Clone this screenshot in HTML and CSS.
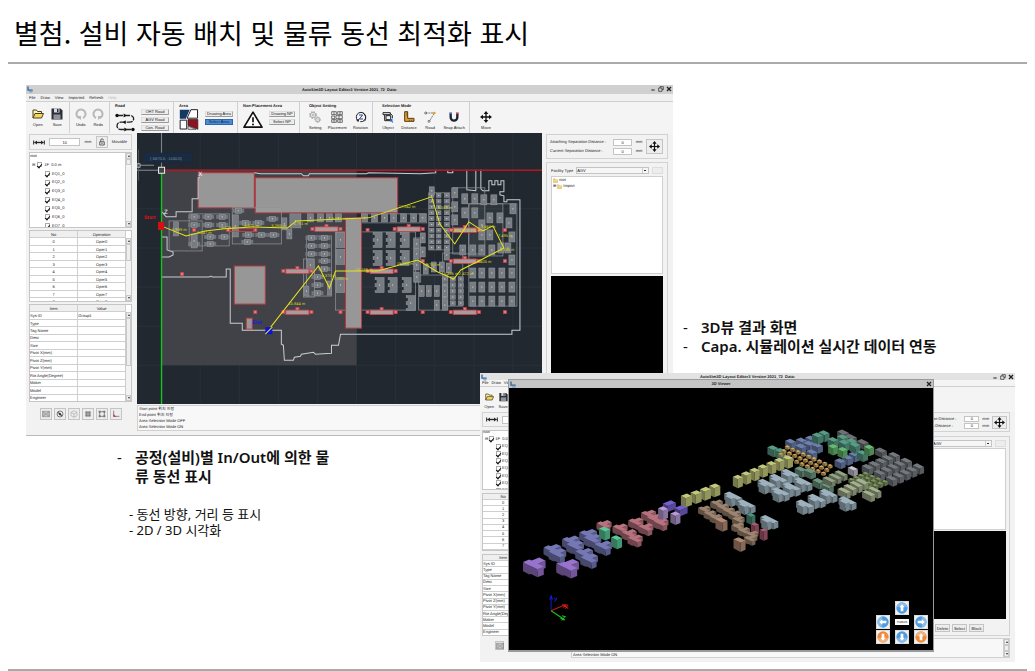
FILE: index.html
```html
<!DOCTYPE html>
<html lang="ko">
<head>
<meta charset="utf-8">
<meta name="viewport" content="width=device-width, initial-scale=1">
<title>별첨. 설비 자동 배치 및 물류 동선 최적화 표시</title>
<link rel="stylesheet" href="styles.css">
</head>
<body>
<svg class="defs" aria-hidden="true">
  <symbol id="i-open" viewBox="0 0 24 24"><path d="M2 20V4h7l2 3h8v4" fill="#fff3b0" stroke="#4a4020" stroke-width="2"/><path d="M2 20l4-9h17l-4 9z" fill="#f5d860" stroke="#4a4020" stroke-width="2"/></symbol>
  <symbol id="i-save" viewBox="0 0 24 24"><path d="M1 1h18l4 4v18H1z" fill="#2c2f36"/><path d="M6 1h11v8H6z" fill="#d8dade"/><path d="M12 2h3v6h-3z" fill="#2c2f36"/><path d="M5 13h14v10H5z" fill="#8f949c"/></symbol>
  <symbol id="i-undo" viewBox="0 0 24 24"><path d="M8 20a9 9 0 1 1 8 0" fill="none" stroke="#b9b9b9" stroke-width="4"/><path d="M2 16h10v8z" fill="#b9b9b9"/></symbol>
  <symbol id="i-redo" viewBox="0 0 24 24"><path d="M8 20a9 9 0 1 1 8 0" fill="none" stroke="#b9b9b9" stroke-width="4"/><path d="M22 16H12v8z" fill="#b9b9b9"/></symbol>
  <symbol id="i-road" viewBox="0 0 60 60"><path d="M6 9h38c16 0 16 20 0 20H18C2 29 2 51 18 51h34" fill="none" stroke="#222" stroke-width="4" stroke-dasharray="18 3"/><circle cx="6" cy="9" r="5" fill="#111"/><circle cx="54" cy="51" r="5" fill="#111"/><path d="M26 3l9 6-9 6zM32 23l-9 6 9 6zM28 45l9 6-9 6z" fill="#111"/></symbol>
  <symbol id="i-area" viewBox="0 0 60 64"><path d="M2 2h30L20 30H2z" fill="#123a63"/><path d="M36 2h20v26H24z" fill="#fff" stroke="#222" stroke-width="3"/><path d="M3 34h20v27H3z" fill="#fff" stroke="#222" stroke-width="3"/><path d="M27 32h30v30L27 50z" fill="#8e1220" stroke="#222" stroke-width="2"/><path d="M27 52l24 10H27z" fill="#ddd" stroke="#333" stroke-width="2"/></symbol>
  <symbol id="i-warn" viewBox="0 0 60 52"><path d="M30 4L57 49H3z" fill="#fff" stroke="#111" stroke-width="5" stroke-linejoin="round"/><path d="M30 19v15" stroke="#111" stroke-width="5"/><circle cx="30" cy="41" r="3" fill="#111"/></symbol>
  <symbol id="i-gear" viewBox="0 0 36 36"><g fill="none" stroke="#909090"><circle cx="12" cy="12" r="8" stroke-width="2"/><circle cx="12" cy="12" r="10" stroke-width="3" stroke-dasharray="4 4"/><circle cx="12" cy="12" r="3" stroke-width="2"/><circle cx="26" cy="26" r="6" stroke-width="2"/><circle cx="26" cy="26" r="8" stroke-width="3" stroke-dasharray="3 3"/><circle cx="26" cy="26" r="2"/></g></symbol>
  <symbol id="i-place" viewBox="0 0 36 36"><g fill="none" stroke="#333" stroke-width="2"><path d="M2 2h14v9H2zM20 2h14v9H20zM2 15h9v8H2zM15 14h19v9H15zM2 26h14v8H2zM20 26h14v8H20zM9 2v9M27 2v9M24 14v9M9 26v8M27 26v8"/></g></symbol>
  <symbol id="i-rot" viewBox="0 0 36 36"><path d="M8 28A14 14 0 1 1 16 32M28 31c6-6 6-18-4-25" fill="none" stroke="#222" stroke-width="3"/><path d="M3 26l10-2-3 10z" fill="#222"/><path d="M12 12h11L13 24h11" fill="none" stroke="#2b4b9a" stroke-width="3"/></symbol>
  <symbol id="i-object" viewBox="0 0 36 36"><path d="M3 5h22v6H3zM8 11v18h16M25 8l6 5v9M12 14h14v12H12z" fill="none" stroke="#222" stroke-width="3"/><path d="M24 22l10 5-4 2 4 5-3 1-3-4-3 3z" fill="#1f5fd0"/></symbol>
  <symbol id="i-dist" viewBox="0 0 36 36"><path d="M5 2h9v20h19v9H5z" fill="#e0a030" stroke="#5a3c10" stroke-width="3"/><path d="M9 6h5M9 12h5M19 26v5M26 26v5" stroke="#5a3c10" stroke-width="2"/></symbol>
  <symbol id="i-node" viewBox="0 0 36 36"><path d="M5 6h24M30 8L16 31" fill="none" stroke="#444" stroke-width="2" stroke-dasharray="6 2"/><circle cx="5" cy="6" r="3" fill="#fff" stroke="#333" stroke-width="2"/><circle cx="31" cy="6" r="4" fill="#e8a020"/><circle cx="15" cy="31" r="3" fill="#fff" stroke="#333" stroke-width="2"/></symbol>
  <symbol id="i-snap" viewBox="0 0 36 36"><path d="M8 7v12a10 10 0 0 0 20 0V7" fill="none" stroke="#1c2230" stroke-width="7"/><path d="M4 4h8v5H4z" fill="#4b78c8"/><path d="M24 4h8v5h-8z" fill="#d05050"/></symbol>
  <symbol id="i-move" viewBox="0 0 36 36"><path d="M18 4v28M4 18h28" stroke="#111" stroke-width="4"/><path d="M18 0l7 9H11zM18 36l7-9H11zM0 18l9-7v14zM36 18l-9-7v14z" fill="#111"/></symbol>
  <symbol id="i-span" viewBox="0 0 36 14"><path d="M2 1v12M34 1v12M5 7h26" stroke="#222" stroke-width="3"/><path d="M4 7l8-5v10zM32 7l-8-5v10zM18 2v10" fill="#222" stroke="#222"/></symbol>
  <symbol id="i-lock" viewBox="0 0 24 30"><path d="M3 14h18v13H3zM7 14V6c0-5 10-5 10 0v3M9 20h6" fill="none" stroke="#333" stroke-width="3"/></symbol>
  <symbol id="i-folder" viewBox="0 0 18 16"><path d="M1 2h6l2 3h8v10H1z" fill="#f0cb72" stroke="#b98a2a" stroke-width="1"/><path d="M1 9h16" stroke="#fff0b8" stroke-width="2"/></symbol>
  <symbol id="i-logo" viewBox="0 0 18 18"><path d="M3 0v11h14" fill="none" stroke="#2b66a8" stroke-width="4"/><path d="M6 14h11M7 17h9" stroke="#6c8cae" stroke-width="2"/></symbol>
  <symbol id="i-restore" viewBox="0 0 18 18"><path d="M6 6V2h10v9h-4M2 6h10v10H2z" fill="none" stroke="#222" stroke-width="2"/></symbol>
  <symbol id="i-close" viewBox="0 0 18 18"><path d="M3 3l12 12M15 3L3 15" stroke="#222" stroke-width="4"/></symbol>
  <symbol id="i-min" viewBox="0 0 18 18"><path d="M4 12h10" stroke="#222" stroke-width="3"/></symbol>
  <symbol id="i-fit" viewBox="0 0 24 24"><path d="M2 4h20v16H2zM2 9h20M2 15h20M8 12h8M2 4l6 5M22 4l-6 5M2 20l6-5M22 20l-6-5" fill="none" stroke="#777" stroke-width="2"/></symbol>
  <symbol id="i-compass" viewBox="0 0 24 24"><circle cx="12" cy="12" r="9" fill="none" stroke="#444" stroke-width="2"/><path d="M5 6l9 4 5 9-9-4z" fill="#333"/></symbol>
  <symbol id="i-cube" viewBox="0 0 24 24"><path d="M12 2l9 5v10l-9 5-9-5V7zM3 7l9 5 9-5M12 12v10" fill="none" stroke="#aaa" stroke-width="2"/></symbol>
  <symbol id="i-grid" viewBox="0 0 24 24"><path d="M3 7h18M3 12h18M3 17h18M7 3v18M12 3v18M17 3v18" stroke="#666" stroke-width="2"/></symbol>
  <symbol id="i-frame" viewBox="0 0 24 24"><path d="M5 5h14v14H5z" fill="none" stroke="#555" stroke-width="2"/><path d="M2 2h6v6H2zM16 2h6v6h-6zM2 16h6v6H2zM16 16h6v6h-6z" fill="#777"/></symbol>
  <symbol id="i-axis" viewBox="0 0 24 24"><path d="M5 2v17h17" fill="none" stroke="#555" stroke-width="2"/><path d="M4 12l9 8H4z" fill="#c33"/></symbol>
  <symbol id="i-arrow" viewBox="0 0 36 36"><circle cx="18" cy="18" r="17" fill="currentColor"/><path d="M3 16a15 14 0 0 1 30 0c-9-4-21-4-30 0z" fill="#fff" opacity=".35"/><path d="M18 7l8 9h-4v12h-8V16h-4z" fill="#fff"/></symbol>
</svg>

<div class="slide">
  <header class="head"><h1>별첨. 설비 자동 배치 및 물류 동선 최적화 표시</h1></header>

  <main class="board">
    <section class="app app-main" aria-label="Layout editor">
      <div class="titlebar"><svg class="logo"><use href="#i-logo"/></svg><b>AutoSim3D Layout Editor3 Version 2021_72&nbsp; Data:</b>
        <span class="winctl"><svg><use href="#i-min"/></svg><svg><use href="#i-restore"/></svg><svg><use href="#i-close"/></svg></span></div>
      <nav class="menu"><span>File</span><span>Draw</span><span>View</span><span>Imported</span><span>Refresh</span><span class="off">Help</span></nav>
      <div class="toolbar">
        <div class="grp g-file plain"><button class="tool"><svg><use href="#i-open"/></svg>Open</button><button class="tool"><svg><use href="#i-save"/></svg>Save</button></div>
        <div class="grp g-undo plain"><button class="tool"><svg><use href="#i-undo"/></svg>Undo</button><button class="tool"><svg><use href="#i-redo"/></svg>Redo</button></div>
        <div class="grp g-road"><b>Road</b><div class="pair"><svg class="big"><use href="#i-road"/></svg><div class="stack three"><button>OHT Road</button><button>AGV Road</button><button>Con. Road</button></div></div></div>
        <div class="grp g-area"><b>Area</b><div class="pair"><svg class="big"><use href="#i-area"/></svg><div class="stack"><button>Drawing Area</button><button class="on">Select Area</button></div></div></div>
        <div class="grp g-np"><b>Non-Placement Area</b><div class="pair"><svg class="big"><use href="#i-warn"/></svg><div class="stack"><button>Drawing NP</button><button>Select NP</button></div></div></div>
        <div class="grp g-obj"><b>Object Setting</b><div class="pair even"><button class="tool"><svg><use href="#i-gear"/></svg>Setting</button><button class="tool"><svg><use href="#i-place"/></svg>Placement</button><button class="tool"><svg><use href="#i-rot"/></svg>Rotation</button></div></div>
        <div class="grp g-sel"><b>Selection Mode</b><div class="pair even"><button class="tool"><svg><use href="#i-object"/></svg>Object</button><button class="tool"><svg><use href="#i-dist"/></svg>Distance</button><button class="tool"><svg><use href="#i-node"/></svg>Road</button><button class="tool"><svg><use href="#i-snap"/></svg>Snap Attach</button></div></div>
        <div class="grp g-move"><b>&nbsp;</b><div class="pair"><button class="tool"><svg><use href="#i-move"/></svg>Move</button></div></div>
      </div>
      <div class="work">
        <aside class="left">
          <div class="panel unit"><svg class="span"><use href="#i-span"/></svg><input type="text" value="10" aria-label="Grid size"><span>mm</span><button class="lock" aria-label="Lock"><svg><use href="#i-lock"/></svg></button><span>Movable</span></div>
          <div class="scroller tree-box"><div class="tree" data-tree></div><div class="sbar"><i></i><u></u><i class="dn"></i></div></div>
          <div class="scroller oper-box"><table class="oper" data-oper></table><div class="sbar below"><i></i><u></u><i class="dn"></i></div></div>
          <div class="scroller item-box"><table class="item" data-item></table><div class="sbar below long"><i></i><u></u><i class="dn"></i></div></div>
          <div class="iconrow"><button aria-label="Fit"><svg><use href="#i-fit"/></svg></button><button aria-label="Orbit"><svg><use href="#i-compass"/></svg></button><button aria-label="Cube"><svg><use href="#i-cube"/></svg></button><button aria-label="Grid"><svg><use href="#i-grid"/></svg></button><button aria-label="Frame"><svg><use href="#i-frame"/></svg></button><button aria-label="Axis"><svg><use href="#i-axis"/></svg></button></div>
        </aside>
        <svg class="plan" id="plan" viewBox="137 133 404 271" preserveAspectRatio="xMidYMid slice" role="img" aria-label="2D layout"></svg>
        <aside class="right">
          <div class="panel dist"><div class="rows"><label>Attaching Separation Distance : <input type="text" value="0"></label><label>Current Separation Distance : <input type="text" value="0"></label></div><div class="rows mm"><span>mm</span><span>mm</span></div><button aria-label="Move"><svg><use href="#i-move"/></svg></button></div>
          <div class="panel facility"><div class="pick"><label for="fac1">Facility Type</label><select id="fac1"><option>AGV</option></select><button aria-label="More"></button></div>
            <div class="lib"><span><svg><use href="#i-folder"/></svg>root</span><span class="sub">⊞ <svg><use href="#i-folder"/></svg>Import</span></div><div class="preview"></div></div>
        </aside>
        <div class="log"><p>Start point 위치 지정</p><p>End point 위치 지정</p><p>Area Selection Mode OFF</p><p>Area Selection Mode ON</p></div>
      </div>
    </section>

    <ul class="note note-3d"><li>3D뷰 결과 화면</li><li>Capa. 시뮬레이션 실시간 데이터 연동</li></ul>

    <section class="app app-mini" aria-label="Layout editor with 3D viewer">
      <div class="titlebar"><svg class="logo"><use href="#i-logo"/></svg><b>AutoSim3D Layout Editor3 Version 2021_72&nbsp; Data:</b>
        <span class="winctl"><svg><use href="#i-min"/></svg><svg><use href="#i-restore"/></svg><svg><use href="#i-close"/></svg></span></div>
      <nav class="menu"><span>File</span><span>Draw</span><span>View</span></nav>
      <div class="toolbar"><div class="grp g-file plain"><button class="tool"><svg><use href="#i-open"/></svg>Open</button><button class="tool"><svg><use href="#i-save"/></svg>Save</button></div></div>
      <div class="work">
        <aside class="left">
          <div class="panel unit"><svg class="span"><use href="#i-span"/></svg><input type="text" aria-label="Grid size"></div>
          <div class="scroller tree-box"><div class="tree" data-tree></div></div>
          <div class="scroller oper-box"><table class="oper" data-oper></table></div>
          <div class="scroller item-box"><table class="item" data-item></table></div>
          <div class="iconrow"><button aria-label="Fit"><svg><use href="#i-fit"/></svg></button></div>
        </aside>
        <aside class="right">
          <div class="panel dist"><div class="rows"><label>Attaching Separation Distance : <input type="text" value="0"></label><label>Current Separation Distance : <input type="text" value="0"></label></div><div class="rows mm"><span>mm</span><span>mm</span></div><button aria-label="Move"><svg><use href="#i-move"/></svg></button></div>
          <div class="panel facility"><div class="pick"><select aria-label="Facility Type"><option>AGV</option></select><button aria-label="More"></button></div>
            <div class="lib"></div><div class="preview"></div>
            <div class="acts"><button>Delete</button><button>Select</button><button>Block</button></div></div>
        </aside>
        <div class="log"><p>Area Selection Mode ON</p><div class="sbar"><i></i><u></u><i class="dn"></i></div></div>
      </div>
      <div class="viewer">
        <div class="titlebar"><svg class="logo"><use href="#i-logo"/></svg><b>3D Viewer</b><span class="winctl"><svg><use href="#i-close"/></svg></span></div>
        <svg class="scene" id="scene" viewBox="509 387 423 263" preserveAspectRatio="xMidYMid slice" role="img" aria-label="3D layout"></svg>
        <div class="pad">
          <button class="up" aria-label="Forward"><svg><use href="#i-arrow"/></svg></button>
          <button class="lf" aria-label="Left"><svg><use href="#i-arrow"/></svg></button>
          <span class="tag">TOROS</span>
          <button class="rt" aria-label="Right"><svg><use href="#i-arrow"/></svg></button>
          <button class="dn warm" aria-label="Lower"><svg><use href="#i-arrow"/></svg></button>
          <button class="dn" aria-label="Back"><svg><use href="#i-arrow"/></svg></button>
          <button class="warm" aria-label="Raise"><svg><use href="#i-arrow"/></svg></button>
        </div>
      </div>
    </section>

    <div class="note-2d">
      <ul class="note"><li>공정(설비)별 In/Out에 의한 물류 동선 표시</li></ul>
      <p>- 동선 방향, 거리 등 표시</p><p>- 2D / 3D 시각화</p>
    </div>
  </main>
</div>
<script src="script.js"></script>
</body>
</html>
```
FILE: styles.css
```css
* { box-sizing: border-box; }
body { margin: 0; background: #fff; color: #111; font-family: "Noto Sans", "Noto Sans CJK KR", sans-serif; }
.defs { position: absolute; width: 0; height: 0; }
.slide { min-height: 100vh; display: flex; flex-direction: column; padding: 0 8px; }
.head { height: 64px; padding: 13px 6px 0; border-bottom: 2px solid #aaa; }
h1 { margin: 0; font-size: 27px; line-height: 40px; font-weight: 400; font-family: "Noto Sans CJK KR", sans-serif; color: #000; white-space: nowrap; }
.board { flex: 1; margin: 0 -8px; padding-top: 21px; display: grid; grid-template-columns: 26fr 454fr 193fr 342fr 20fr; grid-template-rows: 288px 63px auto; align-items: start; }
.slide::after { content: ""; height: 2px; background: #aaa; }

.note { list-style: none; margin: 0; padding: 0; font-size: 15px; line-height: 19px; font-weight: 600; }
.note li { padding-left: 18px; position: relative; }
.note li::before { content: "-"; position: absolute; left: 0; font-weight: 400; }
.note-3d { grid-area: 1 / 4; align-self: end; margin: 0 0 17px 10px; white-space: nowrap; }
.note-2d { grid-area: 3 / 2; padding: 12px 0 0 91px; font-size: 13px; line-height: 16px; }
.note-2d .note { width: 216px; margin-bottom: 20px; word-break: break-all; }
.note-2d p { margin: 0 0 0 12px; }

/* application windows */
.app { position: relative; background: #f2f2f2; font: 4px/6px "Liberation Sans", "Noto Sans CJK KR", sans-serif; color: #222; text-rendering: geometricPrecision; min-width: 0; }
.app button, .app input, .app select { font: inherit; color: inherit; margin: 0; padding: 0; border: 1px solid #c4c4c4; border-radius: 0; background: #ededed; text-align: center; min-width: 0; }
.app input, .app select { background: #fff; }
.app svg { display: block; }
.app-main { grid-area: 1 / 2 / 3 / 4; height: 351px; z-index: 1; border-bottom: 1px solid #b4bcc2; }
.app-mini { grid-area: 2 / 3 / 4 / 5; height: 289px; z-index: 2; }
.titlebar { display: flex; align-items: center; justify-content: center; position: relative; height: 9px; background: #d0d0d0; }
.app-mini .titlebar { height: 7px; background: #e2e2e2; }
.logo { position: absolute; left: 1px; top: 1px; width: 6px; height: 7px; }
.winctl { position: absolute; right: 1px; top: 1px; display: flex; gap: 2px; }
.winctl svg { width: 6px; height: 6px; }
.menu { display: flex; gap: 5px; height: 8px; padding: 1px 3px; border-bottom: 1px solid #cfcfcf; background: #f0f0f0; }
.menu .off { color: #bbb; }
.app-mini .menu { height: 7px; padding: 0 2px; gap: 3px; background: #f4f4f4; }

.toolbar { display: flex; height: 31px; background: #f4f4f4; }
.grp { padding: 1px 4px 0 5px; border-right: 1px solid #d0d0d0; min-width: 0; white-space: nowrap; }
.grp > b { display: block; height: 6px; }
.plain { display: flex; justify-content: space-around; align-items: start; padding: 6px 2px 0; }
.g-file { width: 44px; } .g-undo { width: 40px; } .g-road { width: 64px; } .g-area { width: 64px; }
.g-np { width: 62px; } .g-obj { width: 73px; padding-left: 9px; } .g-sel { width: 97px; padding-left: 9px; } .g-move { flex: 1; border: 0; padding-left: 10px; }
.app .tool { display: flex; flex-direction: column; align-items: center; gap: 2px; border: 0; background: none; }
.tool svg { width: 12px; height: 12px; }
.pair { display: flex; align-items: center; gap: 6px; }
.even { gap: 2px; justify-content: space-between; }
.even .tool, .g-move .tool { padding-top: 2px; }
.big { width: 20px; height: 21px; }
.stack { display: grid; gap: 2px; flex: 1; margin-bottom: 4px; }
.app .stack button { height: 6px; line-height: 4px; border-color: #ddd #aaa #999 #ddd; }
.app .stack .on { background: #4d8bd3; border-color: #2c66ad; color: #0d2340; }

.work { display: grid; grid-template-columns: 111px minmax(0, 1fr) 131px; grid-template-rows: 272px 26px; }
.left { grid-area: 1 / 1 / 3 / 2; padding: 1px 5px 0 3px; display: flex; flex-direction: column; gap: 2px; }
.panel { border: 1px solid #d2d2d2; }
.unit { display: flex; align-items: center; height: 16px; padding: 0 4px 0 3px; justify-content: space-between; }
.span { width: 12px; height: 5px; }
.unit input { width: 31px; height: 8px; }
.app .lock { width: 12px; height: 12px; padding: 1px 2px; }
.lock svg { width: 6px; height: 8px; }
.scroller { display: flex; background: #fff; border: 1px solid #c6c6c6; overflow: hidden; position: relative; align-items: start; }
.tree-box { height: 76px; } .oper-box { height: 72px; } .item-box { height: 98px; }
.tree { flex: 1; height: 78px; margin-top: -1px; display: grid; grid-auto-rows: 1fr; align-items: center; }
.tree label { display: flex; align-items: center; gap: 2px; padding-left: 15px; }
.tree .root { padding-left: 0; } .tree .floor { padding-left: 2px; }
.app .tree input { appearance: none; width: 5px; height: 5px; border: 1px solid #aaa; display: grid; place-items: center; }
.tree input::before { content: ""; width: 2px; height: 4px; border: solid #111; border-width: 0 1px 1px 0; transform: rotate(40deg); }
.sbar { width: 6px; height: 100%; display: flex; flex-direction: column; background: #f3f3f3; border-left: 1px solid #ccc; position: absolute; right: 0; top: 0; bottom: 0; }
.sbar i, .sbar u { display: block; height: 6px; border: 1px solid #c9c9c9; background: #eee; flex: none; }
.sbar i::before { content: ""; display: block; margin: 1px auto; width: 0; border: solid transparent; border-width: 0 1px 2px; border-bottom-color: #333; }
.sbar .dn { margin-top: auto; }
.sbar .dn::before { border-width: 2px 1px 0; border-top-color: #333; }
.below { top: 7px; height: auto; }
.below u { height: 17px; } .long u { height: 48px; }
.app table { border-collapse: collapse; table-layout: fixed; flex: 1; width: 96px; font: inherit; margin-right: 5px; }
.oper { height: 75px; text-align: center; } .item { height: 97px; }
.app td, .app th { padding: 0; border: solid #cfcfcf; border-width: 0 1px 1px 0; line-height: 5px; font-weight: 400; white-space: nowrap; }
.app th { background: #efefef; text-align: center; }
.iconrow { display: flex; gap: 2px; justify-content: center; padding-top: 4px; }
.app .iconrow button { width: 12px; height: 12px; padding: 1px; }
.iconrow svg { width: 8px; height: 8px; }
.plan { width: 100%; height: 271px; background: #212830; }
.right { padding: 1px 5px 0 4px; display: flex; flex-direction: column; gap: 3px; min-width: 0; }
.dist { display: flex; justify-content: space-between; padding: 1px 4px 1px 3px; height: 25px; align-items: center; }
.rows { display: grid; gap: 2px; }
.rows label { display: flex; justify-content: space-between; gap: 4px; white-space: nowrap; width: 82px; }
.rows input { width: 19px; height: 7px; }
.rows span { height: 7px; }
.app .dist button { width: 17px; height: 15px; padding: 1px 2px; }
.dist svg { width: 11px; height: 11px; }
.facility { flex: 1; padding: 4px 4px 2px; display: flex; flex-direction: column; gap: 2px; }
.pick { display: flex; align-items: center; gap: 3px; height: 7px; }
.app select { appearance: none; flex: 1; height: 7px; text-align: left; background: linear-gradient(#333, #333) right 2px center / 2px 1px no-repeat, linear-gradient(#ccc, #ccc) right 5px center / 1px 7px no-repeat, #f6f6f6; }
.app .pick button { width: 11px; height: 7px; border-color: #ddd; }
.lib { height: 98px; background: #fff; border: 1px solid #cfcfcf; padding: 0 1px; }
.lib span { display: flex; align-items: center; gap: 1px; }
.lib svg { width: 5px; height: 5px; }
.preview { flex: 1; background: #000; }
.log { grid-area: 2 / 2 / 3 / 4; background: #f8f8f8; border: 1px solid #d0d0d0; margin-right: 5px; padding: 0 1px; position: relative; overflow: hidden; display: flex; flex-direction: column; justify-content: end; }
.log p { margin: 0; flex: none; line-height: 6px; }

/* compact window */
.app-mini .toolbar { height: 25px; }
.app-mini .g-file { width: 32px; padding: 5px 2px 0; border: 0; }
.app-mini .tool svg { width: 9px; height: 10px; }
.app-mini .work { grid-template-columns: 91px minmax(0, 1fr) 145px; grid-template-rows: 226px 20px; }
.app-mini .left { padding: 0 0 0 2px; gap: 3px; }
.app-mini .unit { height: 15px; justify-content: start; gap: 4px; }
.app-mini .tree-box { height: 60px; } .app-mini .tree { height: 66px; margin-top: -3px; }
.app-mini .oper-box { height: 58px; } .app-mini .oper { height: 62px; }
.app-mini .item-box { height: 82px; } .app-mini .item { height: 81px; }
.app-mini .tree label { gap: 1px; padding-left: 13px; }
.app-mini .tree .root { padding-left: 0; } .app-mini .tree .floor { padding-left: 2px; }
.app-mini td, .app-mini th { line-height: 4px; }
.app-mini table { width: 80px; }
.app-mini .iconrow { justify-content: start; padding: 2px 0 0 13px; }
.app-mini .iconrow button { width: 9px; height: 9px; padding: 0; }
.app-mini .right { grid-column: 3; padding: 0 5px 2px 4px; gap: 4px; }
.app-mini .dist { height: 20px; padding: 0 2px; justify-content: end; gap: 3px; }
.app-mini .rows { gap: 1px; } .app-mini .rows label { width: 79px; } .app-mini .rows input { width: 15px; height: 6px; }
.app-mini .rows span { height: 6px; }
.app-mini .dist button { width: 15px; height: 13px; padding: 0 1px; }
.app-mini .facility { padding: 3px 3px 2px; gap: 1px; }
.app-mini .pick { padding-left: 54px; }
.app-mini .lib { height: 82px; }
.acts { display: flex; gap: 2px; padding: 4px 0 1px 57px; }
.app .acts button { width: 15px; height: 8px; line-height: 5px; flex: none; }
.app-mini .log p { line-height: 5px; }

.viewer { position: absolute; left: 28px; right: 81px; top: 6px; height: 273px; border: 1px solid #9a9a9a; border-bottom-width: 2px; background: #000; }
.app-mini .viewer .titlebar { height: 8px; background: #c4c4c4; }
.scene { width: 100%; height: 262px; }
.pad { position: absolute; right: 5px; bottom: 6px; display: grid; grid-template-columns: repeat(3, 14px); grid-template-rows: 13px 14px 14px; column-gap: 5px; row-gap: 1px; justify-items: center; align-items: center; }
.app .pad button { width: 14px; height: 14px; padding: 0; background: #f2f2f2; border-color: #ddd; color: #4f9be0; }
.app .pad .warm { color: #ef8b3a; }
.pad svg { width: 12px; height: 12px; }
.pad .up { grid-column: 2; } .pad .lf { grid-column: 1; }
.pad .lf svg { transform: rotate(-90deg); } .pad .rt svg { transform: rotate(90deg); } .pad .dn svg { transform: rotate(180deg); }
.tag { width: 14px; height: 6px; background: #fff; font-size: 3px; text-align: center; }
```
FILE: script.js
```js
// ---- side lists ----
const tree = '<label class="root">root</label><label class="floor"><span>⊟</span><input type="checkbox" checked>1F&nbsp; 0.0 m</label>' +
  [1, 2, 3, 4, 5, 6, 7].map(n => `<label><input type="checkbox" checked>EQ${n}_0</label>`).join('');
const oper = '<tr><th>No</th><th>Operation</th></tr>' +
  [0, 1, 2, 3, 4, 5, 6, 7, 8].map(n => `<tr><td>${n}</td><td>Oper${n}</td></tr>`).join('');
const item = '<tr><th>Item</th><th>Value</th></tr>' +
  ['Sys ID', 'Type', 'Tag Name', 'Desc', 'Size', 'Pivot X(mm)', 'Pivot Z(mm)', 'Pivot Y(mm)', 'Rot Angle(Degree)', 'Maker', 'Model', 'Engineer']
    .map((n, i) => `<tr><td>${n}</td><td>${i ? '' : 'Group1'}</td></tr>`).join('');
document.querySelectorAll('[data-tree]').forEach(e => e.innerHTML = tree);
document.querySelectorAll('[data-oper]').forEach(e => e.innerHTML = oper);
document.querySelectorAll('[data-item]').forEach(e => e.innerHTML = item);

// ---- 2D plan ----
let p = '';
const rect = (x, y, x2, y2, a) => p += `<rect x="${x}" y="${y}" width="${x2 - x}" height="${y2 - y}" ${a}/>`;
const line = (pts, c, w = 1) => p += `<polyline points="${pts}" fill="none" stroke="${c}" stroke-width="${w}"/>`;
for (let x = 161; x < 541; x += 39) line(`${x},133 ${x},404`, '#28303a');
for (let y = 170; y < 404; y += 39) line(`137,${y} 541,${y}`, '#28303a');
rect(161, 170, 356, 365, 'fill="#45464b" fill-opacity=".85"');
const steel = 'fill="#979797" stroke="#b8393f" stroke-width="1"';
[[198, 173, 254, 208], [255, 178, 397, 213], [234, 266, 265, 304], [246, 318, 252, 329]].forEach(r => rect(...r, steel));
const wall = '#c9cdd0';
['161,237 167,237 167,250 173,252 173,255 169,257 161,257', '162,212 166,217 176,217 176,212 192,212 192,199 198,199 198,178 200,178',
 '254,173 260,174 301,174 303,176 308,176 309,174 366,174 368,173 420,174 435,173 435,170', '447,170 447,173 452,173 452,170',
 '466,170 466,190 475,191 475,170', '480,170 480,189 482,191 488,191 488,181 491,181 491,185 494,185 494,181 497,181 497,185 500,185 500,181 503,181 503,192 499,192 499,195 503,196 503,202 506,202 506,200 519,200 519,330 511,330 511,334 340,334 338,345 331,345 331,353 315,354 313,352 301,354 300,356 294,357 293,360 284,360 283,345 281,344 281,330 242,330 242,323 230,323 230,269 226,269 226,277 212,277 211,276 209,277 161,277'
].forEach(s => line(s, wall));
const frame = (a, b, c, d) => rect(a, b, c, d, 'fill="#fff" fill-opacity=".03" stroke="#8f9499" stroke-width=".7"');
[[189, 214, 229, 246], [169, 221, 202, 251], [232, 208, 281, 244], [361, 214, 426, 223], [306, 236, 331, 296], [303, 259, 314, 297], [335, 232, 415, 310],
 [413, 238, 420, 282], [428, 193, 449, 250], [452, 188, 484, 254], [468, 204, 516, 306], [418, 275, 447, 310], [442, 253, 462, 306], [468, 204, 502, 256]].forEach(f => frame(...f));
const box = (cx, cy, w, h) => {
  rect(cx - w / 2, cy - h / 2, cx + w / 2, cy + h / 2, 'fill="#777b82" stroke="#999da2" stroke-width=".5"');
  rect(cx - .5, cy - .5, cx + .5, cy + .5, 'fill="#e4e6e8"');
};
const unit = (cx, cy) => { rect(cx - 6, cy - 2, cx + 6, cy + 2, 'fill="#70747b"'); box(cx, cy, 6, 5); };
[[194, 217], [208, 217], [222, 217], [194, 225], [208, 225], [222, 225], [210, 237], [224, 237], [194, 244], [210, 244], [238, 211], [245, 223], [258, 223], [272, 219],
 [248, 235], [261, 235], [273, 235], [247, 242], [311, 238], [324, 238], [311, 246], [324, 246], [311, 254], [324, 254], [324, 261], [324, 269], [317, 277], [317, 285], [317, 293]].forEach(u => unit(...u));
[[176, 229, 5, 14], [194, 241, 6, 14], [235, 226, 6, 22], [284, 224, 5, 12], [289, 234, 5, 10], [295, 221, 11, 14], [329, 288, 4, 14], [310, 265, 6, 12], [306, 291, 5, 10]].forEach(b => box(...b));
[310, 320, 329, 338, 364, 374, 384, 393, 403, 413, 422].forEach(x => box(x, 218, 6, 8));
[240, 257, 285].forEach(y => box(340, y, 9, 15));
[[377, 240], [390, 240], [404, 240], [377, 258], [390, 258], [404, 258], [379, 285], [392, 285], [406, 285], [410, 303]].forEach(([x, y]) => { box(x, y, 9, 15); rect(x - 5, y - 5, x - 3, y - 2, 'fill="#20262d"'); rect(x - 5, y + 2, x - 3, y + 5, 'fill="#20262d"'); });
[[416, 244], [416, 254], [416, 265], [416, 277], [422, 238], [422, 252], [425, 269], [433, 267], [441, 267], [448, 268], [446, 255]].forEach(([x, y]) => box(x, y, 5, 10));
for (let r = 0; r < 10; r++) [431, 438, 446].forEach(x => box(x, 195.5 + r * 5.8, 4.5, 4));
box(431, 191, 5, 8);
for (let r = 0; r < 5; r++) [444, 452, 460].forEach(x => box(x, 279 + r * 6, 5, 4.5));
[[454, 193], [454, 207], [454, 220], [464, 199], [474, 199], [483, 200], [493, 200], [464, 213], [474, 213], [489, 218], [499, 218], [489, 235], [481, 235], [481, 225], [512, 209], [508, 223], [511, 237], [511, 260], [462, 250], [472, 250], [481, 250], [491, 250], [500, 248], [507, 248]].forEach(([x, y]) => box(x, y, 6, 10));
[273, 287, 301].forEach(y => [472, 481, 491, 501, 511].forEach(x => box(x, y, 6, 10)));
[421, 428, 436, 444].forEach(x => box(x, 291, 5, 11));
[436, 444].forEach(x => box(x, 305, 5, 10));
rect(345, 218, 361, 328, steel);
const col = (x, y) => rect(x - 1.5, y - 1.5, x + 1.5, y + 1.5, 'fill="#c9898b" stroke="#d04048" stroke-width=".8"');
const beam = (x, y) => { col(x - 14, y); col(x + 14, y); col(x, y - 3); rect(x - 11.5, y - 2, x + 11.5, y + 2.5, 'fill="#a99a9b" stroke="#d04048" stroke-width=".8"'); };
[[326, 229], [408, 229], [464, 230], [464, 261], [297, 271], [381, 271], [297, 312], [381, 312], [464, 312]].forEach(b => beam(...b));
[[367, 230], [504, 230], [504, 261], [422, 261], [422, 312], [504, 312], [340, 312], [255, 312], [182, 274], [194, 230], [228, 230], [255, 230]].forEach(c => col(...c));
rect(230, 228.5, 254, 231.5, 'fill="none" stroke="#d04048" stroke-width=".8"');
line('161,170.5 541,170.5', '#b3161e', 1.6);
line('161.5,170 161.5,404', '#12c41c', 1.4);
line('161.5,133 161.5,170', '#9aa0a5', .8);
line('137,170.5 161,170.5', '#9aa0a5', .8);
line('140,165.5 154,165.5', '#b8bcc0', .7); line('138.5,150 138.5,181', '#60676e', .7);
rect(137, 164, 140, 167.5, 'fill="none" stroke="#ccc" stroke-width=".8"');
rect(158.5, 167.5, 164.5, 173.5, 'fill="#444" stroke="#eee" stroke-width="1"');
rect(144, 153, 192, 163, 'fill="#182b40"');
const txt = (x, y, s, c, a = '') => p += `<text x="${x}" y="${y}" fill="${c}" ${a}>${s}</text>`;
txt(150, 160, '(-5870.0, -1150.0)', '#8296aa', 'font-size="4"');
txt(198, 176, 'X', '#fff', 'font-size="6"'); txt(164, 214, 'Z', '#fff', 'font-size="6"');
line('161,226 186,236 205,231 222,229 250,227 287,228 296,221 340,219 368,218 431,197 439,224 454,244 468,222 482,231 492,226 503,248 478,261 460,270 453,279 437,272 417,260 377,271 340,271 335,271 329,288 318,266 268,330', '#e6e41c', 1);
[[172, 231, '5.599 m'], [197, 234, '6.247 m'], [221, 229, '5.426 m'], [244, 227, '8.975 m'], [271, 227, '3.265 m'], [293, 225, '5.761 m'], [331, 220, '8.062 m'], [398, 208, '17.842 m'], [437, 209, '5.583 m'],
 [450, 232, '7.884 m'], [466, 232, '2.731 m'], [480, 228, '3.468 m'], [497, 237, '7.495 m'], [499, 251, '3.186 m'], [476, 263, '8.405 m'], [396, 265, '10.518 m'], [425, 266, '5.765 m'], [443, 275, '5.386 m'], [458, 275, '2.472 m'], [355, 271, '10.189 m'], [321, 277, '5.370 m'], [333, 280, '7.190 m'], [288, 305, '15.844 m']]
  .forEach(([x, y, s]) => txt(x, y, s, '#d9d820', 'font-size="4"'));
rect(158, 222, 164, 230, 'fill="#d80f12"'); rect(265, 327, 272, 334, 'fill="#0c12d8"');
line('265,334 272,327', '#e6e41c');
txt(144, 219, 'Start', '#e01216', 'font-size="5" font-weight="700"'); txt(252, 324, 'End', '#1418e8', 'font-size="5" font-weight="700"');
document.getElementById('plan').innerHTML = p;

// ---- 3D scene: every block is drawn around its centre ----
let s = '';
const shade = (c, k) => 'rgb(' + [1, 3, 5].map(i => Math.round(parseInt(c.substr(i, 2), 16) * k)) + ')';
const face = (pts, f) => s += `<polygon points="${pts.map(q => q.map(v => v.toFixed(1)).join()).join(' ')}" fill="${f}"/>`;
const block = (cx, cy, a, b, h, c) => {
  const x = cx - (a + b) / 2, y = cy + a * .2 - b * .25 - h / 2, B = [x + b, y + b * .5], C = [x + a + b, y + b * .5 - a * .4], D = [x + a, y - a * .4];
  face([[x, y], B, [B[0], B[1] + h], [x, y + h]], shade(c, .6));
  face([B, C, [C[0], C[1] + h], [B[0], B[1] + h]], shade(c, .75));
  face([[x, y], B, C, D], c);
};
const cross = (x, y, k, c) => { block(x + k * .1, y - k * .25, 1.8 * k, .7 * k, .8 * k, c); block(x, y, .7 * k, 1.6 * k, .9 * k, c); };
const L = (zx, zy) => [475 + zx / 3, 365 + zy / 3], R = (zx, zy) => [680 + zx / 3, 420 + zy / 3];
const each = (f, list, fn) => list.sort((m, n) => m[1] - n[1]).forEach(q => fn(...f(...q)));
each(L, [[175, 608], [275, 612]], (x, y) => cross(x, y, 9, '#9873cc'));
each(L, [[230, 560], [245, 573], [285, 535], [298, 550], [337, 515], [350, 530], [382, 550], [325, 572], [340, 589]], (x, y) => cross(x, y, 7, '#7578b4'));
each(L, [[385, 485], [433, 495], [460, 512], [478, 528], [480, 477], [510, 494], [518, 454], [535, 467], [555, 479]], (x, y) => cross(x, y, 6, '#b8727e'));
each(L, [[388, 504], [424, 530]], (x, y) => block(x, y, 5, 6, 9, '#58c898'));
each(L, [[582, 422], [617, 435]], (x, y) => block(x, y, 8, 5, 6, '#7460cc'));
each(L, [[563, 443], [600, 458]], (x, y) => block(x, y, 5, 5, 9, '#b79cd4'));
each(L, [[633, 405], [662, 395], [690, 385], [718, 375]], (x, y) => block(x, y, 6, 5, 9, '#c3c87c'));
each(R, [[487, 43], [510, 57], [545, 72], [600, 97]], (x, y) => block(x, y, 5, 7, 5, '#6d7176'));
each(R, [[330, 72], [362, 68], [390, 62], [360, 86], [385, 78], [410, 84], [393, 103], [478, 130], [500, 120], [520, 110]], (x, y) => block(x, y, 5, 6, 6, '#6c80ab'));
each(R, [[410, 55], [430, 48], [457, 68], [485, 60], [490, 76], [512, 72], [522, 83], [545, 107], [277, 93], [300, 101]], (x, y) => block(x, y, 5, 6, 7, '#589c86'));
each(R, [[457, 88], [485, 97], [565, 90]], (x, y) => block(x, y, 5, 5, 7, '#66b872'));
const orange = [];
for (let i = 0; i < 9; i++) for (let j = 0; j < 3; j++) orange.push([320 + i * 16 - j * 10, 82 + i * 7 + j * 11]);
each(R, orange, (x, y) => block(x, y, 2.5, 2.5, 2.5, '#d6ac62'));
each(R, [[172, 183], [197, 173], [222, 162], [247, 152], [272, 142], [296, 132], [322, 125]], (x, y) => block(x, y, 5, 5, 9, '#c3c87c'));
const grey = [];
for (let i = 0; i < 5; i++) for (let j = 0; j < 3; j++) grey.push([560 + i * 20 + j * 36, 148 - i * 9 + j * 17]);
each(R, grey, (x, y) => block(x, y, 4.5, 7, 6, '#75797e'));
each(R, [[360, 155], [388, 160], [413, 190], [441, 204]], (x, y) => block(x, y, 5, 7, 6, '#6d9680'));
each(R, [[445, 184], [463, 175], [481, 166]], (x, y) => block(x, y, 4, 9, 5, '#93a384'));
const moss = [];
for (let i = 0; i < 4; i++) for (let j = 0; j < 4; j++) moss.push([512 + i * 19 + j * 14, 182 + i * 8 - j * 6]);
each(R, moss, (x, y) => block(x, y, 3, 3.5, 3.5, '#7f9560'));
each(R, [[490, 219], [508, 209], [526, 200], [543, 192], [563, 227], [582, 217]], (x, y) => block(x, y, 4, 9, 6, '#a5b18e'));
each(R, [[516, 153]], (x, y) => block(x, y, 4, 6, 6, '#c8c4d4'));
each(R, [[155, 238], [195, 262], [263, 308], [255, 200], [290, 185], [325, 170], [297, 225], [330, 210], [365, 195], [370, 262], [405, 245], [440, 230], [497, 252]], (x, y) => { block(x + 1, y - 1, 5, 13, 6, '#9db2be'); block(x - 2, y + 1, 4, 6, 8, '#9db2be'); });
each(R, [[211, 295]], (x, y) => block(x, y, 4, 5, 8, '#4f8f80'));
each(R, [[223, 325], [249, 342]], (x, y) => block(x, y, 4, 4, 9, '#ad5c72'));
each(L, [[685, 438], [702, 452], [720, 463], [722, 420], [740, 432], [758, 443], [776, 453], [787, 469], [785, 489], [803, 502], [828, 513], [822, 526]], (x, y) => cross(x, y, 5, '#9d8470'));
each(L, [[738, 477], [792, 537]], (x, y) => block(x, y, 5, 7, 9, '#b48c76'));
const seg = (d, c) => s += `<path d="${d}" fill="none" stroke="${c}" stroke-width="1"/>`;
seg('M551 610V596M549.500 599L551 595L552.500 599M554 597L555.500 599M557 597L554.500 601', '#1818c8');
seg('M551 610L565 604M562 604L566 604L563 607M565 604L568 608M568 604L565 608', '#c81818');
seg('M551 610L563 618M560 617L564 619M562 615L565 616L562 619L565 619', '#18c818');
document.getElementById('scene').innerHTML = s;
```
